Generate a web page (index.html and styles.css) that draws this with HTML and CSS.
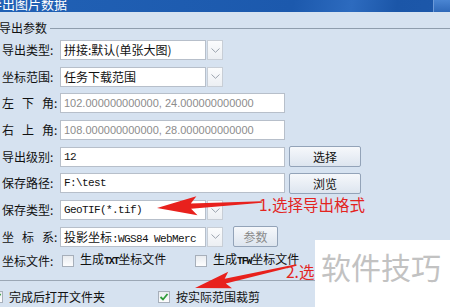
FILE: index.html
```html
<!DOCTYPE html>
<html lang="zh-CN">
<head>
    <meta charset="UTF-8">
    <title>导出图片数据</title>
    <link rel="stylesheet" href="styles.css">
</head>
<body>
    <div class="dialog">
        <!-- Title bar (cut at the top) -->
        <div class="titlebar">
            <span class="title">导出图片数据</span>
            <span class="close"></span>
        </div>

        <!-- Group: export parameters -->
        <div class="group-head"><span>导出参数</span><i class="line"></i></div>

        <div class="form">
            <div class="row">
                <span class="lbl">导出类型:</span>
                <div class="combo">
                    <div class="combo-text">拼接:默认(单张大图)</div>
                    <div class="combo-btn"><svg width="9" height="5" viewBox="0 0 9 5"><polyline points="0.5,0.5 4.5,4.3 8.5,0.5" fill="none" stroke="#9ca4ae" stroke-width="1"/></svg></div>
                </div>
            </div>
            <div class="row">
                <span class="lbl">坐标范围:</span>
                <div class="combo">
                    <div class="combo-text">任务下载范围</div>
                    <div class="combo-btn"><svg width="9" height="5" viewBox="0 0 9 5"><polyline points="0.5,0.5 4.5,4.3 8.5,0.5" fill="none" stroke="#9ca4ae" stroke-width="1"/></svg></div>
                </div>
            </div>
            <div class="row">
                <span class="lbl"><span class="spread">左下</span>角:</span>
                <div class="field off">102.000000000000, 24.000000000000</div>
            </div>
            <div class="row">
                <span class="lbl"><span class="spread">右上</span>角:</span>
                <div class="field off">108.000000000000, 28.000000000000</div>
            </div>
            <div class="row">
                <span class="lbl">导出级别:</span>
                <div class="field mono">12</div>
                <div class="btn">选择</div>
            </div>
            <div class="row">
                <span class="lbl">保存路径:</span>
                <div class="field mono">F:\test</div>
                <div class="btn">浏览</div>
            </div>
            <div class="row">
                <span class="lbl">保存类型:</span>
                <div class="combo">
                    <div class="combo-text mono">GeoTIF(*.tif)</div>
                    <div class="combo-btn"><svg width="9" height="5" viewBox="0 0 9 5"><polyline points="0.5,0.5 4.5,4.3 8.5,0.5" fill="none" stroke="#9ca4ae" stroke-width="1"/></svg></div>
                </div>
            </div>
            <div class="row">
                <span class="lbl"><span class="spread">坐标</span>系:</span>
                <div class="combo">
                    <div class="combo-text"><span class="cjk">投影坐标</span><span class="mono">:WGS84 WebMerc</span></div>
                    <div class="combo-btn"><svg width="9" height="5" viewBox="0 0 9 5"><polyline points="0.5,0.5 4.5,4.3 8.5,0.5" fill="none" stroke="#9ca4ae" stroke-width="1"/></svg></div>
                </div>
                <div class="btn small">参数</div>
            </div>
            <div class="row checks">
                <span class="lbl">坐标文件:</span>
                <label class="check first"><i class="cb"></i><span>生成<span class="tiny">TXT</span>坐标文件</span></label>
                <label class="check"><i class="cb"></i><span>生成<span class="tiny">TFW</span>坐标文件</span></label>
            </div>
        </div>

        <div class="sep"></div>

        <div class="row bottom">
            <label class="check first"><i class="cb on"><svg width="10" height="10" viewBox="0 0 10 10"><polyline points="1.5,5 4,7.5 8.5,2" fill="none" stroke="#2f9b3a" stroke-width="1.8"/></svg></i><span>完成后打开文件夹</span></label>
            <label class="check"><i class="cb on"><svg width="10" height="10" viewBox="0 0 10 10"><polyline points="1.5,5 4,7.5 8.5,2" fill="none" stroke="#2f9b3a" stroke-width="1.8"/></svg></i><span>按实际范围裁剪</span></label>
        </div>

        <!-- Annotations drawn over the dialog -->
        <svg class="marks" width="450" height="307" viewBox="0 0 450 307">
            <polygon transform="translate(157 208) rotate(-3.3)" points="0,0 40,-9.5 34,-2.6 105,-0.8 105,0.8 34,2.6 40,9.5" fill="#e8211d"/>
            <polygon transform="translate(195 288) rotate(-12.8)" points="0,0 36,-8.5 31,-2.4 104,-0.8 104,0.8 31,2.4 36,8.5" fill="#e8211d"/>
        </svg>
        <div class="note note1">1.选择导出格式</div>
        <div class="note note2">2.选</div>
        <div class="watermark">软件技巧</div>
    </div>
</body>
</html>
```

FILE: styles.css
```css
/* Dialog base */
body {
    margin: 0;
    font-family: "Noto Sans CJK SC", sans-serif;
    font-size: 12px;
    color: #111;
    background-color: #d6e2f0;
}

.dialog {
    position: relative;
    width: 450px;
    height: 307px;
    overflow: hidden;
    background-color: #d6e2f0;
}

/* Title bar */
.titlebar {
    display: flex;
    height: 12px;
    overflow: hidden;
    background: linear-gradient(100deg, #2161b5 0%, #1c59ad 65%, #2d6bbf 78%, #1b56a8 88%, #1d58aa 100%);
}

.title {
    flex: 1;
    margin-top: -3px;
    margin-left: -11px;
    color: #fff;
    font-size: 13px;
    line-height: 13px;
}

.close {
    width: 16px;
    background: linear-gradient(#4a85d2, #2f69b9);
    border-left: 1px solid #6c9ad8;
}

/* Group header */
.group-head {
    display: flex;
    align-items: center;
    height: 14px;
    margin-top: 9px;
}

.group-head span {
    margin-left: -1px;
    line-height: 14px;
}

.group-head .line {
    flex: 1;
    height: 0;
    margin-left: 3px;
    border-top: 1px solid #8f9dad;
}

/* Form rows */
.form {
    display: flex;
    flex-direction: column;
    gap: 6.7px;
    margin-top: 5px;
}

.row {
    display: flex;
    align-items: center;
    height: 20px;
}

.lbl {
    box-sizing: border-box;
    width: 60px;
    padding-left: 2px;
    line-height: 16px;
}

.spread {
    letter-spacing: 8px;
}

.combo {
    display: flex;
    gap: 1px;
    width: 163px;
    height: 20px;
}

.combo-text {
    flex: 1;
    overflow: hidden;
    padding-left: 3px;
    border: 1px solid #b7bfca;
    background-color: #fff;
    line-height: 18px;
    white-space: nowrap;
}

.combo-btn {
    display: flex;
    align-items: center;
    justify-content: center;
    width: 14px;
    border: 1px solid #c8ced6;
    background: linear-gradient(#fbfcfd, #eceff3);
}

.field {
    box-sizing: border-box;
    width: 225px;
    height: 20px;
    overflow: hidden;
    padding-left: 3px;
    border: 1px solid #b7bfca;
    background-color: #fff;
    line-height: 18px;
    white-space: nowrap;
}

.field.off {
    color: #8c8c8c;
    font-family: "Liberation Sans", sans-serif;
    font-size: 11px;
}

.mono {
    font-family: "Liberation Mono", monospace;
    font-size: 11px;
    letter-spacing: -0.6px;
}

.cjk {
    font-size: 12px;
}

.btn {
    box-sizing: border-box;
    width: 72px;
    height: 21px;
    margin-left: 4px;
    border: 1px solid #93a3b8;
    border-radius: 2px;
    background: linear-gradient(#f6f8fb, #dde5ef);
    text-align: center;
    line-height: 19px;
}

.btn.small {
    width: 45px;
    margin-left: 10px;
    color: #8a8a8a;
}

/* Checkboxes */
.row.checks {
    height: 14px;
}

.check {
    display: flex;
    align-items: center;
    gap: 6px;
    line-height: 14px;
    white-space: nowrap;
}

.checks .check.first {
    width: 133px;
    margin-left: 2px;
}

.cb {
    box-sizing: border-box;
    display: flex;
    align-items: center;
    justify-content: center;
    width: 12px;
    height: 12px;
    border: 1px solid #a7afba;
    background: linear-gradient(#e9ecf0, #fdfdfe);
}

.tiny {
    font-family: "Liberation Mono", monospace;
    font-size: 10px;
    font-weight: bold;
    letter-spacing: -1.3px;
}

.sep {
    margin-top: 12px;
    border-top: 1px solid #9ba7b5;
}

.row.bottom {
    height: 14px;
    margin-top: 9px;
}

.bottom .check.first {
    width: 167px;
    margin-left: -9px;
}

/* Annotations */
.marks {
    position: absolute;
    top: 0;
    left: 0;
    pointer-events: none;
}

.note {
    position: absolute;
    color: #e3241f;
    font-size: 15.5px;
    line-height: 18px;
    white-space: nowrap;
}

.note1 {
    left: 259px;
    top: 195px;
}

.note2 {
    left: 286px;
    top: 262px;
}

.watermark {
    position: absolute;
    left: 315px;
    top: 240px;
    width: 135px;
    height: 67px;
    padding: 10px 0 0 6px;
    box-sizing: border-box;
    background-color: #fff;
    color: #c2c2c2;
    font-size: 30px;
    line-height: 32px;
    white-space: nowrap;
}
```
